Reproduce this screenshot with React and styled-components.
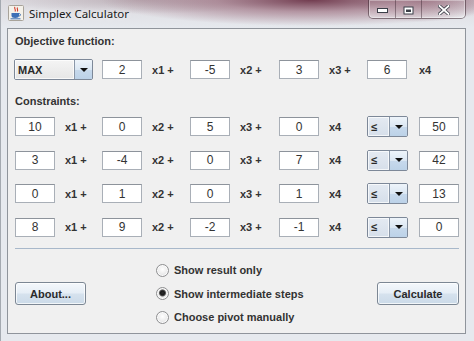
import React from 'react';
import styled, { createGlobalStyle } from 'styled-components';

const GlobalStyle = createGlobalStyle`
  html, body {
    margin: 0;
    padding: 0;
    background: #e6e9ee;
  }
  * {
    box-sizing: border-box;
  }
`;

const objective = [2, -5, 3, 6];

const constraints = [
  [10, 0, 5, 0, 50],
  [3, -4, 0, 7, 42],
  [0, 1, 0, 1, 13],
  [8, 9, -2, -1, 0],
];

const options = [
  { label: 'Show result only', checked: false },
  { label: 'Show intermediate steps', checked: true },
  { label: 'Choose pivot manually', checked: false },
];

const JavaIcon = () => (
  <svg width="16" height="16" viewBox="0 0 16 16">
    <rect x="0.5" y="0.5" width="15" height="15" rx="1" fill="#f4f1ea" stroke="#a8a39a" />
    <path d="M7 2 C5.5 3.5 8.5 4.5 7 6.5 M9.5 2.5 C8.5 4 10.5 4.5 9.3 6.5" stroke="#d23a2a" strokeWidth="1.1" fill="none" />
    <path d="M3.5 8 H11 V10.5 C11 12.3 9.5 13 7.2 13 C5 13 3.5 12.3 3.5 10.5 Z" fill="#3d6fb6" />
    <path d="M11 8.6 C13 8.6 13 11 11 11" stroke="#3d6fb6" strokeWidth="1" fill="none" />
    <rect x="2.5" y="13.3" width="10" height="1" fill="#3d6fb6" />
  </svg>
);

const MinGlyph = () => (
  <svg width="11" height="5" viewBox="0 0 11 5">
    <rect x="0.5" y="0.5" width="10" height="4" fill="#fff" stroke="#3b3f48" />
  </svg>
);

const MaxGlyph = () => (
  <svg width="11" height="9" viewBox="0 0 11 9">
    <rect x="0.5" y="0.5" width="10" height="8" fill="#3b3f48" />
    <rect x="1.5" y="1.5" width="8" height="6" fill="#fff" />
    <rect x="3" y="3.5" width="5" height="2.5" fill="#3b3f48" />
  </svg>
);

const CloseGlyph = () => (
  <svg width="12" height="10" viewBox="0 0 12 10">
    <path d="M1.5 1 L10.5 9 M10.5 1 L1.5 9" stroke="#3b3f48" strokeWidth="3.4" strokeLinecap="square" />
    <path d="M1.5 1 L10.5 9 M10.5 1 L1.5 9" stroke="#fff" strokeWidth="1.8" strokeLinecap="square" />
  </svg>
);

const ArrowDown = () => (
  <svg width="8" height="4" viewBox="0 0 8 4">
    <path d="M0 0 H8 L4 4 Z" fill="#111" />
  </svg>
);

const Combo = ({ value, width, tint }) => (
  <ComboBox style={{ width }}>
    <ComboValue $tint={tint}>{value}</ComboValue>
    <ComboArrow>
      <ArrowDown />
    </ComboArrow>
  </ComboBox>
);

const App = () => {
  return (
    <>
      <GlobalStyle />
      <Window>
        <TitleBar>
          <IconSlot>
            <JavaIcon />
          </IconSlot>
          <Title>Simplex Calculator</Title>
          <CaptionButtons>
            <CaptionButton $w={27}>
              <MinGlyph />
            </CaptionButton>
            <CaptionButton $w={26}>
              <MaxGlyph />
            </CaptionButton>
            <CaptionButton $w={43} $last>
              <CloseGlyph />
            </CaptionButton>
          </CaptionButtons>
        </TitleBar>

        <FrameBody>
          <Panel>
            <Heading>Objective function:</Heading>
            <EquationGrid $top={11}>
              <ComboCell>
                <Combo value="MAX" width={79} />
              </ComboCell>
              {objective.map((v, i) => (
                <React.Fragment key={i}>
                  <Field>{v}</Field>
                  {i < 3 && <Term>x{i + 1} +</Term>}
                </React.Fragment>
              ))}
              <Term $col={11} $flush>
                x4
              </Term>
            </EquationGrid>

            <Heading $top={14}>Constraints:</Heading>
            <ConstraintGrid>
              {constraints.map((row, r) => (
                <React.Fragment key={r}>
                  {row.slice(0, 4).map((v, i) => (
                    <React.Fragment key={i}>
                      <Field>{v}</Field>
                      <Term>{i < 3 ? `x${i + 1} +` : 'x4'}</Term>
                    </React.Fragment>
                  ))}
                  <Combo value="≤" width={41} tint />
                  <Field $col={11}>{row[4]}</Field>
                </React.Fragment>
              ))}
            </ConstraintGrid>

            <Separator />

            <BottomBar>
              <PushButton style={{ width: 71 }}>About...</PushButton>
              <RadioGroup>
                {options.map((o) => (
                  <RadioRow key={o.label}>
                    <RadioCircle $checked={o.checked} />
                    <RadioLabel>{o.label}</RadioLabel>
                  </RadioRow>
                ))}
              </RadioGroup>
              <PushButton $right style={{ width: 82 }}>
                Calculate
              </PushButton>
            </BottomBar>
          </Panel>
        </FrameBody>
      </Window>
    </>
  );
};

const Window = styled.div`
  width: 474px;
  height: 341px;
  display: flex;
  flex-direction: column;
  background: #e6e9ee;
  border-left: 1px solid #a4a9b0;
  overflow: hidden;
`;

const TitleBar = styled.div`
  height: 28px;
  display: flex;
  align-items: center;
  background:
    radial-gradient(ellipse 210px 26px at 310px 0, rgba(108, 52, 72, 0.95) 0%, rgba(150, 100, 118, 0.6) 45%, rgba(215, 210, 215, 0) 100%),
    radial-gradient(ellipse 70px 22px at 420px 0, rgba(120, 70, 90, 0.75) 0%, rgba(170, 130, 145, 0) 100%),
    radial-gradient(ellipse 140px 14px at 140px 0, rgba(150, 125, 135, 0.45) 0%, rgba(200, 190, 195, 0) 100%),
    linear-gradient(to bottom, #dcdadf 0%, #e6e9ee 100%);
`;

const IconSlot = styled.div`
  display: flex;
  margin-left: 7px;
  margin-top: -2px;
`;

const Title = styled.span`
  margin-left: 5px;
  margin-top: -2px;
  font-family: 'Noto Sans', 'Open Sans', sans-serif;
  font-size: 11.5px;
  color: #1a1a1a;
  text-shadow: 0 0 6px rgba(255, 255, 255, 0.9);
`;

const CaptionButtons = styled.div`
  margin-left: auto;
  margin-right: 8px;
  align-self: flex-start;
  display: flex;
  height: 19px;
  border: 1px solid rgba(60, 40, 50, 0.55);
  border-top: none;
  border-radius: 0 0 5px 5px;
  box-shadow: inset 0 0 0 1px rgba(255, 255, 255, 0.35);
  overflow: hidden;
`;

const CaptionButton = styled.div`
  width: ${(p) => p.$w}px;
  display: flex;
  align-items: center;
  justify-content: center;
  padding-top: 2px;
  background: linear-gradient(to bottom, rgba(255, 255, 255, 0.12), rgba(255, 255, 255, 0.32));
  border-right: ${(p) => (p.$last ? 'none' : '1px solid rgba(60, 40, 50, 0.45)')};
`;

const FrameBody = styled.div`
  flex: 1;
  display: flex;
  padding: 0 8px 7px 6px;
`;

const Panel = styled.div`
  flex: 1;
  display: flex;
  flex-direction: column;
  background: #f0f0f0;
  border: 1px solid #8f949b;
  padding: 5px 6px 0 7px;
  font-family: 'Liberation Sans', Arial, sans-serif;
  font-size: 11px;
  color: #333;
`;

const Heading = styled.div`
  margin-top: ${(p) => p.$top || 0}px;
  height: 14px;
  line-height: 14px;
  font-weight: bold;
  color: #333;
`;

const EquationGrid = styled.div`
  margin-top: ${(p) => p.$top || 0}px;
  display: grid;
  grid-template-columns: 40px 47px 40px 48px 40px 49px 40px 48px 41px 11px 40px;
  grid-auto-rows: 21px;
  align-items: center;
`;

const ConstraintGrid = styled(EquationGrid)`
  margin-top: 8px;
  row-gap: 12.5px;
`;

const ComboCell = styled.div`
  grid-column: 1 / span 2;
  margin-left: -1px;
  display: flex;
`;

const Field = styled.div`
  grid-column: ${(p) => (p.$col ? p.$col : 'auto')};
  width: 40px;
  height: 19px;
  display: flex;
  align-items: center;
  justify-content: center;
  background: #fff;
  border: 1px solid #a9afb7;
  border-top-color: #8d939b;
  color: #333;
  font-size: 12px;
`;

const Term = styled.div`
  grid-column: ${(p) => (p.$col ? p.$col : 'auto')};
  padding-left: ${(p) => (p.$flush ? 0 : 10)}px;
  font-weight: bold;
  color: #333;
  white-space: nowrap;
`;

const ComboBox = styled.div`
  height: 21px;
  display: flex;
  border: 1px solid #7d8898;
  border-radius: 2px;
  overflow: hidden;
`;

const ComboValue = styled.div`
  flex: 1;
  display: flex;
  align-items: center;
  padding-left: 3px;
  font-weight: bold;
  color: #2a2a2a;
  background: ${(p) =>
    p.$tint
      ? 'linear-gradient(to bottom, #e4eaf2, #d6dfea)'
      : 'linear-gradient(to bottom, #f4f4f4, #e6e6e6)'};
  box-shadow: inset 0 0 0 1px rgba(255, 255, 255, 0.7);
`;

const ComboArrow = styled.div`
  width: 18px;
  display: flex;
  align-items: center;
  justify-content: center;
  border-left: 1px solid #8a97a8;
  background: linear-gradient(to bottom, #eef4fa 0%, #dbe7f3 50%, #c7d9ec 51%, #bcd2e8 100%);
`;

const Separator = styled.div`
  margin-top: 10px;
  height: 1px;
  width: 444px;
  background: #a8b8ca;
`;

const BottomBar = styled.div`
  display: flex;
  align-items: center;
  padding-top: 10px;
`;

const PushButton = styled.div`
  height: 23px;
  display: flex;
  align-items: center;
  justify-content: center;
  margin-left: ${(p) => (p.$right ? 'auto' : '0')};
  border: 1px solid #7c8794;
  border-radius: 3px;
  background: linear-gradient(to bottom, #f4f8fc 0%, #e6eef6 48%, #d6e2ee 52%, #cbdae8 100%);
  box-shadow: inset 0 0 0 1px rgba(255, 255, 255, 0.75);
  font-weight: bold;
  color: #2a2a2a;
`;

const RadioGroup = styled.div`
  margin-left: 70px;
  display: flex;
  flex-direction: column;
`;

const RadioRow = styled.div`
  height: 23.5px;
  display: flex;
  align-items: center;
  gap: 5px;
`;

const RadioCircle = styled.span`
  width: 13px;
  height: 13px;
  border-radius: 50%;
  border: 1px solid #8e8f91;
  background: ${(p) =>
    p.$checked
      ? 'radial-gradient(circle at 50% 45%, #2c2c2c 0, #1a1a1a 2px, #555 3px, #e9e9e9 4px, #f6f6f6 100%)'
      : 'radial-gradient(circle at 50% 40%, #ffffff 0, #f1f1f1 40%, #d9dadc 100%)'};
  box-shadow: inset 0 0 0 1px rgba(255, 255, 255, 0.8);
`;

const RadioLabel = styled.span`
  font-weight: bold;
  color: #333;
`;

export default App;
